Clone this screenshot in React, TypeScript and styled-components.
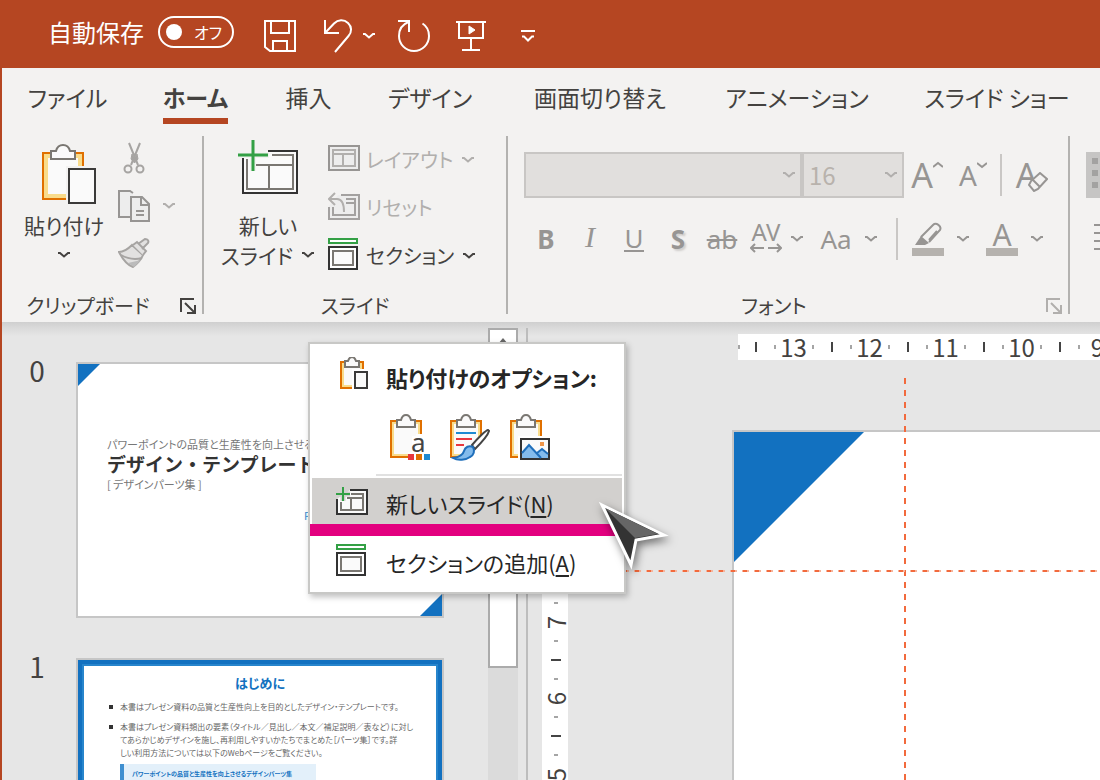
import React from "react";
import styled, { createGlobalStyle, css } from "styled-components";

const color = {
  brand: "#b54622",
  ribbon: "#f3f2f1",
  text: "#444240",
  muted: "#979593",
  disabled: "#b1afad",
  line: "#b3b2b0",
  desk: "#e6e6e6",
  blue: "#1271c0",
  guide: "#f26a3d",
  green: "#33a045",
  pink: "#e3007f",
};

const GlobalStyle = createGlobalStyle`
  *, *::before, *::after { box-sizing: border-box; }
  body {
    margin: 0;
    font-family: "Noto Sans CJK JP", "Noto Sans", sans-serif;
    font-feature-settings: "palt";
    color: ${color.text};
    overflow: hidden;
  }
  button, select {
    font: inherit;
    font-feature-settings: inherit;
    color: inherit;
    background: none;
    border: 0;
    padding: 0;
    margin: 0;
  }
  svg { display: block; flex: none; }
`;

/* ---------- Window frame ---------- */

const Window = styled.div`
  display: flex;
  flex-direction: column;
  height: 100vh;
  overflow: hidden;
`;

const TitleBar = styled.header`
  display: flex;
  align-items: center;
  flex: none;
  height: 68px;
  padding: 0 48px 4px;
  background: ${color.brand};
  color: #fff;
`;

const AutoSave = styled.div`
  display: flex;
  align-items: center;
  gap: 14px;
  font-size: 24px;
  line-height: 32px;
`;

const Switch = styled.button`
  display: flex;
  align-items: center;
  justify-content: space-between;
  width: 76px;
  height: 32px;
  padding: 0 10px 0 6px;
  border: 2px solid #fff;
  border-radius: 16px;
  font-size: 16px;
  line-height: 24px;
`;

const Knob = styled.span`
  width: 16px;
  height: 16px;
  border-radius: 50%;
  background: #fff;
`;

const QuickAccess = styled.div`
  display: flex;
  align-items: center;
  gap: 22px;
  margin-left: 30px;
  padding-top: 8px;
`;

const QuickButton = styled.button<{ $width: number }>`
  display: flex;
  align-items: center;
  justify-content: center;
  flex: none;
  width: ${(p) => p.$width}px;
  height: 34px;
`;

const SplitPair = styled.div<{ $gap: number }>`
  display: flex;
  align-items: center;
  gap: ${(p) => p.$gap}px;
`;

const Frame = styled.div`
  display: flex;
  flex-direction: column;
  flex: 1;
  min-height: 0;
  border-left: 2px solid ${color.brand};
`;

/* ---------- Tabs ---------- */

const TabBar = styled.nav`
  display: flex;
  flex: none;
  height: 64px;
  overflow: hidden;
  background: ${color.ribbon};
`;

const Tab = styled.button<{ $width: number; $active?: boolean }>`
  flex: none;
  width: ${(p) => p.$width}px;
  height: 56px;
  font-size: 23px;
  line-height: 32px;
  font-weight: ${(p) => (p.$active ? 700 : 400)};
`;

const TabLabel = styled.span<{ $active?: boolean }>`
  display: inline-block;
  padding: 13px 0 5px;
  border-bottom: 6px solid ${(p) => (p.$active ? color.brand : "transparent")};
  white-space: nowrap;
`;

/* ---------- Ribbon ---------- */

const Ribbon = styled.div`
  display: flex;
  flex: none;
  height: 190px;
  overflow: hidden;
  background: ${color.ribbon};
`;

const Group = styled.section<{ $width: number }>`
  display: flex;
  flex-direction: column;
  flex: none;
  width: ${(p) => p.$width}px;
`;

const GroupDivider = styled.div`
  flex: none;
  width: 2px;
  margin: 4px 0 8px;
  background: ${color.line};
`;

const GroupBody = styled.div<{ $inset: number; $gap: number }>`
  display: flex;
  gap: ${(p) => p.$gap}px;
  height: 158px;
  padding: 8px 0 0 ${(p) => p.$inset}px;
`;

const GroupFooter = styled.footer`
  display: flex;
  align-items: center;
  height: 32px;
  font-size: 20px;
  line-height: 30px;
`;

const GroupName = styled.span`
  flex: 1;
  text-align: center;
  white-space: nowrap;
`;

const Launcher = styled.button`
  display: flex;
  justify-content: center;
  width: 28px;
  color: ${color.text};
  &:disabled { color: ${color.disabled}; }
`;

const LargeButton = styled.button<{ $width: number }>`
  display: flex;
  flex-direction: column;
  align-items: center;
  align-self: flex-start;
  flex: none;
  width: ${(p) => p.$width}px;
  font-size: 21px;
  line-height: 30px;
  white-space: nowrap;
  svg + span { margin-top: 6px; }
`;

const LabelLine = styled.span`
  display: flex;
  align-items: center;
  justify-content: center;
  gap: 8px;
  height: 30px;
`;

const SmallColumn = styled.div`
  display: flex;
  flex-direction: column;
  gap: 16px;
  padding-top: 2px;
`;

const SmallButton = styled.button`
  display: flex;
  align-items: center;
  gap: 6px;
  height: 32px;
  font-size: 20px;
  line-height: 32px;
  white-space: nowrap;
  &:disabled { color: ${color.disabled}; }
`;

const SmallLabel = styled.span`
  display: flex;
  align-items: center;
  gap: 8px;
  padding-top: 4px;
`;

const FontRows = styled.div`
  display: flex;
  flex-direction: column;
  gap: 20px;
  padding-top: 12px;
`;

const ToolRow = styled.div<{ $height: number }>`
  display: flex;
  align-items: center;
  height: ${(p) => p.$height}px;
  color: ${color.muted};
`;

const Combo = styled.div<{ $width: number }>`
  display: grid;
  grid-template-columns: 1fr 18px;
  align-items: center;
  flex: none;
  width: ${(p) => p.$width}px;
  height: 46px;
  border: 2px solid #c8c6c4;
  background: #e1dfdd;
  color: ${color.disabled};
  select {
    appearance: none;
    height: 42px;
    padding: 0 0 2px 5px;
    font-size: 24px;
    opacity: 1;
    color: #b8b2ac;
  }
`;

const Tool = styled.button<{ $width: number }>`
  display: flex;
  align-items: center;
  justify-content: center;
  flex: none;
  width: ${(p) => p.$width}px;
  height: 42px;
  color: ${color.muted};
`;

const DropTool = styled.button`
  display: flex;
  justify-content: center;
  flex: none;
  width: 18px;
  color: ${color.muted};
`;

const ToolDivider = styled.div<{ $before: number }>`
  flex: none;
  width: 2px;
  height: 42px;
  margin: 0 4px 0 ${(p) => p.$before}px;
  background: #c9c7c5;
`;

const Split = styled.div`
  display: flex;
  align-items: center;
  & + & { margin-left: 4px; }
`;

const latin = css`
  font-family: "Noto Sans", "Open Sans", sans-serif;
  line-height: 42px;
`;

const Glyph = styled.span<{ $size: number; $bold?: boolean }>`
  ${latin}
  font-size: ${(p) => p.$size}px;
  font-weight: ${(p) => (p.$bold ? 700 : 400)};
`;

const ItalicGlyph = styled.span`
  font-family: "Liberation Serif", serif;
  font-style: italic;
  font-size: 30px;
  line-height: 38px;
  padding-bottom: 4px;
`;

const UnderGlyph = styled.span`
  ${latin}
  font-size: 26px;
  line-height: 23px;
  border-bottom: 2px solid currentColor;
`;

const ShadowGlyph = styled(Glyph)`
  text-shadow: 2px 2px 2px #d0cecc;
`;

const StrikeGlyph = styled(Glyph)`
  text-decoration: line-through;
  text-decoration-thickness: 2px;
`;

const SpacingGlyph = styled.span`
  display: flex;
  flex-direction: column;
  align-items: center;
  font-family: "Noto Sans", "Open Sans", sans-serif;
  font-size: 24px;
  line-height: 22px;
  padding-bottom: 4px;
`;

const Bulleted = styled.button`
  flex: none;
  display: flex;
  width: 60px;
  height: 46px;
  padding: 6px;
  background: #c6c5c4;
`;

/* ---------- Workspace ---------- */

const Workspace = styled.main`
  position: relative;
  display: flex;
  flex: 1;
  min-height: 0;
  overflow: hidden;
  background: linear-gradient(#cfcfcf, #d8d8d8 5px, #e0e0e0 10px, ${color.desk} 14px);
`;

const SlideList = styled.ol`
  flex: none;
  width: 486px;
  margin: 0;
  padding: 40px 0 0;
  list-style: none;
`;

const SlideItem = styled.li`
  display: flex;
  margin-bottom: 40px;
`;

const SlideNumber = styled.span`
  width: 70px;
  margin-right: 4px;
  text-align: center;
  font-size: 28px;
  line-height: 16px;
`;

const Thumb = styled.article<{ $framed?: boolean }>`
  position: relative;
  width: 368px;
  height: 256px;
  overflow: hidden;
  background: #fff;
  border: 2px solid #c6c6c6;
  box-shadow: ${(p) => (p.$framed ? "inset 0 0 0 4px #1271c0, inset 0 0 0 6px #2785cc" : "none")};
`;

const Corner = styled.span<{ $size: number; $end?: boolean }>`
  position: absolute;
  width: ${(p) => p.$size}px;
  height: ${(p) => p.$size}px;
  background: ${color.blue};
  ${(p) =>
    p.$end
      ? css`right: 0; bottom: 0; clip-path: polygon(100% 0, 100% 100%, 0 100%);`
      : css`left: 0; top: 0; clip-path: polygon(0 0, 100% 0, 0 100%);`}
`;

const CoverText = styled.div`
  padding: 71px 0 0 29px;
  white-space: nowrap;
  p { margin: 0; font-size: 11px; line-height: 18px; color: #777; }
  h2 {
    margin: 0;
    font-size: 19px;
    line-height: 22px;
    font-feature-settings: normal;
    color: #333;
  }
`;

const CoverMark = styled.span`
  display: block;
  padding: 12px 0 0 197px;
  font-size: 11px;
  line-height: 20px;
  color: #3a8fd0;
`;

const IntroText = styled.div`
  padding: 13px 26px 0 42px;
  font-size: 8px;
  line-height: 13px;
  color: #666;
  white-space: nowrap;
  h2 {
    margin: 0 16px 7px 0;
    text-align: center;
    font-size: 13px;
    line-height: 20px;
    color: ${color.blue};
  }
  ul { margin: 0 0 5px; padding: 0; list-style: none; }
  li { position: relative; }
  li + li { margin-top: 7px; }
  li::before {
    content: "";
    position: absolute;
    left: -11px;
    top: 5px;
    width: 4px;
    height: 4px;
    background: #333;
  }
`;

const IntroNote = styled.p`
  width: 196px;
  height: 40px;
  margin: 0;
  padding: 3px 8px;
  border-left: 4px solid #3f8fd0;
  background: #e3f0fa;
  color: ${color.blue};
  font-size: 6px;
  font-weight: 700;
`;

const ScrollBar = styled.div`
  display: flex;
  flex-direction: column;
  flex: none;
  width: 30px;
  margin-top: 6px;
  background: #dbdbdb;
`;

const ScrollUp = styled.button`
  display: flex;
  justify-content: center;
  height: 30px;
  padding-top: 8px;
  border: 2px solid #ababab;
  background: #fff;
`;

const ScrollThumb = styled.div`
  height: 310px;
  border: 2px solid #ababab;
  background: #fff;
`;

const Splitter = styled.div`
  flex: none;
  width: 2px;
  margin: 6px 0 0 8px;
  background: #bdbdbd;
`;

const Editor = styled.section`
  display: grid;
  flex: 1;
  min-width: 0;
  grid-template-columns: 26px 1fr;
  grid-template-rows: 26px 1fr;
  padding: 12px 0 0 14px;
`;

const HRuler = styled.div`
  grid-column: 2;
  display: flex;
  align-items: center;
  height: 26px;
  min-width: 0;
  margin-left: 170px;
  background: #fff;
  &::before {
    content: "";
    flex: none;
    width: 2px;
    height: 4px;
    margin-right: 6px;
    background: #a5a5a5;
  }
`;

const VRuler = styled.div`
  grid-column: 1;
  grid-row: 2;
  display: flex;
  flex-direction: column;
  align-items: center;
  min-height: 0;
  margin-top: 72px;
  padding-top: 10px;
  background: #fff;
`;

const Slot = styled.span<{ $vertical?: boolean }>`
  display: flex;
  align-items: center;
  justify-content: center;
  flex: none;
  width: 19px;
  height: 19px;
  font-size: 24px;
  line-height: 24px;
  ${(p) => p.$vertical && "transform: rotate(-90deg);"}
`;

const Tick = styled.i<{ $minor?: boolean }>`
  flex: none;
  width: 2px;
  height: ${(p) => (p.$minor ? 4 : 10)}px;
  background: ${(p) => (p.$minor ? "#a5a5a5" : "#444")};
`;

const Canvas = styled.div`
  position: relative;
  display: flex;
  grid-column: 2;
  grid-row: 2;
  min-width: 0;
  padding: 70px 0 0 164px;
`;

const SlidePage = styled.div`
  position: relative;
  flex: 1;
  border: solid #c6c6c6;
  border-width: 2px 0 0 2px;
  background: #fff;
`;

const VGuide = styled.div`
  position: absolute;
  left: 336px;
  top: 18px;
  bottom: 0;
  width: 2px;
  background: repeating-linear-gradient(${color.guide} 0 6px, transparent 6px 12px);
`;

const HGuide = styled.div`
  position: absolute;
  left: 54px;
  right: 0;
  top: 210px;
  height: 2px;
  background: repeating-linear-gradient(
    90deg, #f6b49c 0 1px, ${color.guide} 1px 5px, #f6b49c 5px 7px, transparent 7px 12px
  );
`;

/* ---------- Context menu ---------- */

const Menu = styled.div`
  position: absolute;
  left: 306px;
  top: 20px;
  width: 318px;
  padding: 8px 2px;
  border: 2px solid #c8c8c6;
  background: #fff;
  box-shadow: 2px 3px 6px rgba(0, 0, 0, 0.25);
  color: #262626;
  font-size: 22px;
  line-height: 32px;
`;

const menuRow = css`
  display: flex;
  align-items: center;
  gap: 18px;
  width: 100%;
  padding-left: 24px;
  white-space: nowrap;
`;

const MenuHeading = styled.div`
  ${menuRow}
  height: 46px;
  font-weight: 700;
`;

const PasteOptions = styled.div`
  display: flex;
  gap: 20px;
  height: 48px;
  margin: 16px 0 12px;
  padding-left: 78px;
`;

const MenuRule = styled.hr`
  height: 2px;
  margin: 0 0 2px 64px;
  border: 0;
  background: #e1e1e1;
`;

const MenuItem = styled.button<{ $height: number; $active?: boolean }>`
  ${menuRow}
  height: ${(p) => p.$height}px;
  background: ${(p) => (p.$active ? "#d2d0ce" : "transparent")};
  u { text-decoration-thickness: 2px; text-underline-offset: 3px; }
`;

const MenuText = styled.span`
  padding-top: 3px;
`;

const Marker = styled.div`
  height: 12px;
  margin: 0 6px 0 -2px;
  background: ${color.pink};
`;

const Pointer = styled.svg`
  position: absolute;
  left: 590px;
  top: 172px;
  filter: drop-shadow(2px 4px 4px rgba(0, 0, 0, 0.5));
`;

/* ---------- Icons ---------- */

const Chevron = ({ stroke = "currentColor" }: { stroke?: string }) => (
  <svg width="14" height="8" viewBox="0 0 14 8" fill="none" stroke={stroke} strokeWidth="2">
    <path d="M1 2h2l4 3.500L11 2h2" />
  </svg>
);

const SaveIcon = () => (
  <svg width="32" height="32" viewBox="0 0 32 32" fill="none" stroke="#fff" strokeWidth="2">
    <path d="M1 1h30v30H6l-5-4zM7 1v12h18V1M9 31V21h14v10" />
  </svg>
);

const UndoIcon = () => (
  <svg width="36" height="34" viewBox="0 0 36 34" fill="none" stroke="#fff" strokeWidth="2">
    <path d="M7 1v13h14M7.500 13.500L16 4.500c4-4 10-4.200 14-.500s4 9 .500 13L17 33" />
  </svg>
);

const RedoIcon = () => (
  <svg width="34" height="34" viewBox="0 0 34 34" fill="none" stroke="#fff" strokeWidth="2">
    <path d="M1 2h11v11M11.500 3C5 5.500 2 11 2 17a15 15 0 0 0 30 0c0-5.500-2.500-10-6.500-12.500" />
  </svg>
);

const PresentIcon = () => (
  <svg width="30" height="32" viewBox="0 0 30 32" fill="none" stroke="#fff" strokeWidth="2">
    <path d="M0 2h30M3 2v16h24V2M15 18v12M6 30h18" />
    <path d="M13 6l6 4-6 4z" fill="#fff" strokeWidth="1" />
  </svg>
);

const CustomizeIcon = () => (
  <svg width="14" height="14" viewBox="0 0 14 14" fill="none" stroke="#fff" strokeWidth="2">
    <path d="M0 2h14M1 7.500h2l4 4 4-4h2" />
  </svg>
);

const PasteIcon = () => (
  <svg width="64" height="64" viewBox="0 0 64 64">
    <path d="M11 13h40v46H11z" fill="#fafafa" stroke="#e07000" strokeWidth="2" />
    <path d="M14 16h34v40H14z" fill="none" stroke="#f9dc8b" strokeWidth="4" />
    <path d="M19 11h5c1-4 4-6 7-6s6 2 7 6h5v8H19z" fill="#fafafa" stroke="#7a7772" strokeWidth="2" />
    <path d="M34 26h30v38H34z" fill="#f3f2f1" />
    <path d="M37 29h26v34H37z" fill="#fafafa" stroke="#3b3a39" strokeWidth="2" />
  </svg>
);

const CutIcon = () => (
  <svg width="32" height="32" viewBox="0 0 32 32" fill="none" stroke="#a6a4a2" strokeWidth="2">
    <path d="M11 1l9 22M22 1l-9 22" />
    <path d="M14 12l2.500 5 2.500-5 1 5-3.500 4-3.500-4z" fill="#a6a4a2" strokeWidth="1" />
    <circle cx="10" cy="27" r="3.500" />
    <circle cx="22" cy="27" r="3.500" />
  </svg>
);

const CopyIcon = () => (
  <svg width="32" height="32" viewBox="0 0 32 32" fill="#ededed" stroke="#979593" strokeWidth="2">
    <path d="M15 3l-3-2H1v26h11" />
    <path d="M13 7h11l7 7v17H13z" />
    <path d="M23 7v8h8M18 21h8M18 25h8" fill="none" />
  </svg>
);

const BrushIcon = () => (
  <svg width="34" height="32" viewBox="0 0 34 32" fill="#e2e1e0" stroke="#a6a4a2" strokeWidth="2">
    <path d="M1 14c5 0 9-3 13-7l11 10c-2 5-6 9-10 12C9 27 4 20 1 14z" />
    <path d="M3 17c7 4 13 5 21 3M15 7l4-3 9 9-3 4M20 6l7-5c3 0 4 2 3 4l-6 6" />
    <path d="M10 25l6 4 7-7z" fill="#bbb" stroke="none" />
  </svg>
);

const NewSlideLarge = () => (
  <svg width="60" height="64" viewBox="0 0 60 64" fill="none" strokeWidth="2">
    <path d="M30 11h29v42H5V18" fill="#fafafa" stroke="none" />
    <path d="M30 11h29v42H5V18" stroke="#333" />
    <path d="M34 15h21v34H9V19M12 25h43M31 25v24" stroke="#7a7772" />
    <path d="M15 0v31M0 15h31" stroke="#f3f2f1" strokeWidth="6" />
    <path d="M15 0v31M0 15h30" stroke={color.green} strokeWidth="3" />
  </svg>
);

const LayoutIcon = () => (
  <svg width="32" height="26" viewBox="0 0 32 26" fill="none" strokeWidth="2">
    <path d="M1 1h30v24H1z" fill="#ededed" stroke="#979593" />
    <path d="M5 5h22v16H5zM5 9h22M15 9v12" stroke="#b1afad" />
  </svg>
);

const ResetIcon = () => (
  <svg width="32" height="28" viewBox="0 0 32 28" fill="none" strokeWidth="2">
    <path d="M10 3h21v24H1V14" fill="#ededed" stroke="none" />
    <path d="M13 3h18v24H1V15M18 7h9v16H5v-8M18 11h9" stroke="#a3a1a0" />
    <path d="M7 1L1 7l6 6M2 7h7c5 0 7 4 7 13" stroke="#b1afad" />
  </svg>
);

const SectionIcon = () => (
  <svg width="32" height="32" viewBox="0 0 32 32" fill="none" strokeWidth="2">
    <path d="M1 1h28v4H1z" stroke={color.green} fill="#fff" />
    <path d="M1 9h28v22H1z" stroke="#333" fill="#fff" />
    <path d="M5 13h20v14H5z" stroke="#7a7772" fill="#fafafa" />
  </svg>
);

const NewSlideSmall = () => (
  <svg width="32" height="28" viewBox="0 0 32 28" fill="none" strokeWidth="2">
    <path d="M14 3h17v24H1V12" stroke="#333" fill="#fafafa" />
    <path d="M15 7h12v16H5v-8M11 11h16M15 11v12" stroke="#7a7772" />
    <path d="M7 0v14M0 7h14" stroke="#d2d0ce" strokeWidth="5" />
    <path d="M7 0v14M0 7h14" stroke={color.green} />
  </svg>
);

const PasteSmall = () => (
  <svg width="32" height="36" viewBox="0 0 32 36" fill="none" strokeWidth="2">
    <path d="M5 5h22v26H5z" stroke="#e07000" fill="#fafafa" />
    <path d="M7 7h18v22H7z" stroke="#f9dc8b" />
    <path d="M9 4h3c1-3 3-4 4-4s3 1 4 4h3v6H9z" stroke="#7a7772" fill="#fafafa" />
    <path d="M16 12h16v24H16z" fill="#fff" />
    <path d="M19 15h12v16H19z" stroke="#3b3a39" fill="#fafafa" />
  </svg>
);

const Board = () => (
  <g fill="none" strokeWidth="2">
    <path d="M1 7h30v36H1z" stroke="#e07000" fill="#fafafa" />
    <path d="M3 9h26v32H3z" stroke="#f9dc8b" />
    <path d="M7 6h4c1-4 3-5 5-5s4 1 5 5h4v7H7z" stroke="#7a7772" fill="#fafafa" />
  </g>
);

const PasteTheme = () => (
  <svg width="40" height="48" viewBox="0 0 40 48">
    <Board />
    <path d="M20 20h20v28H18V38h2z" fill="#fff" />
    <path d="M8 15h18v7h-4v16H8z" fill="#fafafa" />
    <text x="21" y="38" fontSize="26" fontFamily="Noto Sans, sans-serif" fill="#444">a</text>
    <path d="M18 40h6v6h-6z" fill="#e8373e" />
    <path d="M26 40h6v6h-6z" fill="#e07000" />
    <path d="M34 40h6v6h-6z" fill="#1e8ad2" />
  </svg>
);

const PasteFormat = () => (
  <svg width="40" height="48" viewBox="0 0 40 48">
    <Board />
    <path d="M26 24h14v24H6l8-10z" fill="#fff" />
    <path d="M6 19h20" stroke="#1e8ad2" strokeWidth="2" />
    <path d="M6 25h16M6 31h8" stroke="#e8373e" strokeWidth="2" />
    <path d="M38 16c-2 0-11 9-16 15l3 4c6-6 13-14 14-18z" fill="#fff" stroke="#444" strokeWidth="2" />
    <path d="M23 33c-4-2-8 0-9 4s-4 6-11 7c5 3 13 2 17-1 4-2 5-6 3-10z" fill="#83bbec" stroke="#1f6fbb" strokeWidth="2" />
  </svg>
);

const PastePicture = () => (
  <svg width="40" height="48" viewBox="0 0 40 48">
    <Board />
    <path d="M8 22h32v26H8z" fill="#fff" />
    <path d="M11 25h28v20H11z" fill="#fafafa" stroke="#333" strokeWidth="2" />
    <path d="M12 39l7-8 8 8 5-4 6 5v4H12z" fill="#83bbec" />
    <path d="M12 39l7-8 12 13M27 39l5-4 6 5" fill="none" stroke="#1f6fbb" strokeWidth="2" />
    <path d="M30 28h4v4h-4z" fill="#f0964a" />
  </svg>
);

const LauncherIcon = () => (
  <svg width="16" height="16" viewBox="0 0 16 16" fill="none" stroke="currentColor" strokeWidth="2">
    <path d="M1 14V1h13M5 5l9 9M15 7v8H7" />
  </svg>
);

const CaretMark = ({ down = false }: { down?: boolean }) => (
  <svg width="10" height="28" viewBox="0 0 10 28" fill="none" stroke="currentColor" strokeWidth="2">
    <path d={down ? "M0 2l5 4 5-4" : "M0 6l5-4 5 4"} />
  </svg>
);

const EraserIcon = () => (
  <svg width="20" height="20" viewBox="0 0 20 20" fill="#f3f2f1" stroke="currentColor" strokeWidth="2">
    <path d="M12 1l7 6-9 10-4 2-5-6 2-4zM5 8l7 7" />
  </svg>
);

const OverlapTool = styled.span`
  display: flex;
  align-items: flex-end;
  svg { margin: 0 0 4px -9px; }
`;

const SpacingArrows = () => (
  <svg width="32" height="10" viewBox="0 0 32 10" fill="none" stroke="currentColor" strokeWidth="2">
    <path d="M1 5h13M5 1L1 5l4 4M18 5h13M27 1l4 4-4 4" />
  </svg>
);

const HighlighterIcon = () => (
  <svg width="32" height="34" viewBox="0 0 32 34" fill="none">
    <path d="M9 15L21 3c3-3 9 1 7 5L17 20" stroke="#979593" strokeWidth="2" />
    <path d="M9 14l8 7-4 2H3z" fill="#979593" />
    <path d="M17 18l8-9" stroke="#979593" strokeWidth="2" />
    <path d="M0 26h32v8H0z" fill="#b5b2ae" />
  </svg>
);

const FontColorGlyph = styled.span`
  width: 32px;
  height: 34px;
  border-bottom: 8px solid #b5b2ae;
  font-family: "Noto Sans", sans-serif;
  font-size: 30px;
  line-height: 26px;
  text-align: center;
`;

/* ---------- Data ---------- */

const tabs = [
  { name: "ファイル", width: 131 },
  { name: "ホーム", width: 125, active: true },
  { name: "挿入", width: 101 },
  { name: "デザイン", width: 142 },
  { name: "画面切り替え", width: 198 },
  { name: "アニメーション", width: 196 },
  { name: "スライド ショー", width: 204 },
];

const Ruler = ({ marks }: { marks: number[] }) => (
  <>
    {marks.map((n) => (
      <React.Fragment key={n}>
        <Slot><Tick /></Slot>
        <Slot><Tick $minor /></Slot>
        <Slot>{n}</Slot>
        <Slot><Tick $minor /></Slot>
      </React.Fragment>
    ))}
  </>
);

const SideRuler = ({ marks }: { marks: number[] }) => (
  <>
    {marks.map((n) => (
      <React.Fragment key={n}>
        <Slot $vertical><Tick $minor /></Slot>
        <Slot $vertical>{n}</Slot>
        <Slot $vertical><Tick $minor /></Slot>
        <Slot $vertical><Tick /></Slot>
      </React.Fragment>
    ))}
  </>
);

/* ---------- App ---------- */

export default function App() {
  return (
    <Window lang="ja">
      <GlobalStyle />
      <TitleBar>
        <AutoSave>
          <span id="autosave">自動保存</span>
          <Switch role="switch" aria-checked={false} aria-labelledby="autosave">
            <Knob />
            オフ
          </Switch>
        </AutoSave>
        <QuickAccess>
          <QuickButton $width={32} aria-label="上書き保存"><SaveIcon /></QuickButton>
          <SplitPair $gap={8}>
            <QuickButton $width={36} aria-label="元に戻す"><UndoIcon /></QuickButton>
            <QuickButton $width={14} aria-label="元に戻す履歴"><Chevron /></QuickButton>
          </SplitPair>
          <QuickButton $width={32} aria-label="繰り返し"><RedoIcon /></QuickButton>
          <QuickButton $width={38} aria-label="先頭から開始"><PresentIcon /></QuickButton>
          <QuickButton $width={32} aria-label="クイック アクセスのカスタマイズ"><CustomizeIcon /></QuickButton>
        </QuickAccess>
      </TitleBar>

      <Frame>
        <TabBar>
          {tabs.map((t) => (
            <Tab key={t.name} $width={t.width} $active={t.active}>
              <TabLabel $active={t.active}>{t.name}</TabLabel>
            </Tab>
          ))}
        </TabBar>

        <Ribbon>
          <Group $width={200}>
            <GroupBody $inset={18} $gap={10}>
              <LargeButton $width={88}>
                <PasteIcon />
                <LabelLine>貼り付け</LabelLine>
                <LabelLine><Chevron /></LabelLine>
              </LargeButton>
              <SmallColumn>
                <SmallButton disabled aria-label="切り取り"><CutIcon /></SmallButton>
                <SplitPair $gap={12}>
                  <SmallButton disabled aria-label="コピー"><CopyIcon /></SmallButton>
                  <SmallButton disabled aria-label="コピーのオプション"><Chevron /></SmallButton>
                </SplitPair>
                <SmallButton disabled aria-label="書式のコピー"><BrushIcon /></SmallButton>
              </SmallColumn>
            </GroupBody>
            <GroupFooter>
              <GroupName>クリップボード</GroupName>
              <Launcher aria-label="クリップボードの設定"><LauncherIcon /></Launcher>
            </GroupFooter>
          </Group>
          <GroupDivider />

          <Group $width={302}>
            <GroupBody $inset={18} $gap={14}>
              <LargeButton $width={92}>
                <NewSlideLarge />
                <LabelLine>新しい</LabelLine>
                <LabelLine>スライド <Chevron /></LabelLine>
              </LargeButton>
              <SmallColumn>
                <SmallButton disabled><LayoutIcon /><SmallLabel>レイアウト<Chevron /></SmallLabel></SmallButton>
                <SmallButton disabled><ResetIcon /><SmallLabel>リセット</SmallLabel></SmallButton>
                <SmallButton><SectionIcon /><SmallLabel>セクション<Chevron /></SmallLabel></SmallButton>
              </SmallColumn>
            </GroupBody>
            <GroupFooter><GroupName>スライド</GroupName></GroupFooter>
          </Group>
          <GroupDivider />

          <Group $width={560}>
            <GroupBody $inset={16} $gap={0}>
              <FontRows>
                <ToolRow $height={46}>
                  <Combo $width={278}>
                    <select disabled aria-label="フォント" />
                    <Chevron />
                  </Combo>
                  <Combo $width={102}>
                    <select disabled aria-label="フォント サイズ"><option>16</option></select>
                    <Chevron />
                  </Combo>
                  <Tool $width={46} aria-label="フォント サイズの拡大"><Glyph $size={34}>A</Glyph><CaretMark /></Tool>
                  <Tool $width={46} aria-label="フォント サイズの縮小"><Glyph $size={28}>A</Glyph><CaretMark down /></Tool>
                  <ToolDivider $before={4} />
                  <Tool $width={52} aria-label="書式のクリア">
                    <OverlapTool><Glyph $size={34}>A</Glyph><EraserIcon /></OverlapTool>
                  </Tool>
                </ToolRow>
                <ToolRow $height={42}>
                  <Tool $width={44}><Glyph $size={26} $bold>B</Glyph></Tool>
                  <Tool $width={44}><ItalicGlyph>I</ItalicGlyph></Tool>
                  <Tool $width={44}><UnderGlyph>U</UnderGlyph></Tool>
                  <Tool $width={44}><ShadowGlyph $size={26} $bold>S</ShadowGlyph></Tool>
                  <Tool $width={44}><StrikeGlyph $size={26}>ab</StrikeGlyph></Tool>
                  <Split>
                    <Tool $width={44}><SpacingGlyph>AV<SpacingArrows /></SpacingGlyph></Tool>
                    <DropTool aria-label="文字の間隔"><Chevron /></DropTool>
                  </Split>
                  <Split>
                    <Tool $width={52}><Glyph $size={26}>Aa</Glyph></Tool>
                    <DropTool aria-label="文字種の変換"><Chevron /></DropTool>
                  </Split>
                  <ToolDivider $before={16} />
                  <Split>
                    <Tool $width={52} aria-label="蛍光ペンの色"><HighlighterIcon /></Tool>
                    <DropTool aria-label="蛍光ペンの色の選択"><Chevron /></DropTool>
                  </Split>
                  <Split>
                    <Tool $width={52}><FontColorGlyph>A</FontColorGlyph></Tool>
                    <DropTool aria-label="フォントの色の選択"><Chevron /></DropTool>
                  </Split>
                </ToolRow>
              </FontRows>
            </GroupBody>
            <GroupFooter>
              <GroupName>フォント</GroupName>
              <Launcher disabled aria-label="フォントの設定"><LauncherIcon /></Launcher>
            </GroupFooter>
          </Group>
          <GroupDivider />

          <Group $width={300}>
            <GroupBody $inset={16} $gap={0}>
              <FontRows>
                <Bulleted aria-label="箇条書き">
                  <svg width="48" height="34" viewBox="0 0 48 34" fill="#a3a2a1">
                    <path d="M0 0h6v6H0zM0 12h6v6H0zM0 24h6v6H0zM14 2h34v2H14zM14 14h34v2H14zM14 26h34v2H14z" />
                  </svg>
                </Bulleted>
                <Tool $width={48} aria-label="左揃え">
                  <svg width="32" height="30" viewBox="0 0 32 30" stroke="#979593" strokeWidth="2">
                    <path d="M0 1h32M0 9h20M0 17h32M0 25h20" />
                  </svg>
                </Tool>
              </FontRows>
            </GroupBody>
          </Group>
        </Ribbon>

        <Workspace>
          <SlideList>
            <SlideItem>
              <SlideNumber>0</SlideNumber>
              <Thumb>
                <Corner $size={22} />
                <CoverText>
                  <p>パワーポイントの品質と生産性を向上させる</p>
                  <h2>デザイン・テンプレート</h2>
                  <p>[ デザインパーツ集 ]</p>
                  <CoverMark>P</CoverMark>
                </CoverText>
                <Corner $size={22} $end />
              </Thumb>
            </SlideItem>
            <SlideItem>
              <SlideNumber>1</SlideNumber>
              <Thumb $framed>
                <IntroText>
                  <h2>はじめに</h2>
                  <ul>
                    <li>本書はプレゼン資料の品質と生産性向上を目的としたデザイン・テンプレートです。</li>
                    <li>
                      本書はプレゼン資料頻出の要素（タイトル／見出し／本文／補足説明／表など）に対し<br />
                      てあらかじめデザインを施し、再利用しやすいかたちでまとめた［パーツ集］です。詳<br />
                      しい利用方法については以下のWebページをご覧ください。
                    </li>
                  </ul>
                  <IntroNote>パワーポイントの品質と生産性を向上させるデザインパーツ集</IntroNote>
                </IntroText>
              </Thumb>
            </SlideItem>
          </SlideList>

          <ScrollBar>
            <ScrollUp aria-label="上へスクロール">
              <svg width="10" height="6" viewBox="0 0 10 6" fill="#666"><path d="M5 0l5 6H0z" /></svg>
            </ScrollUp>
            <ScrollThumb />
          </ScrollBar>
          <Splitter />

          <Editor>
            <HRuler><Ruler marks={[13, 12, 11, 10, 9, 8, 7, 6]} /></HRuler>
            <VRuler><SideRuler marks={[9, 8, 7, 6, 5, 4, 3]} /></VRuler>
            <Canvas>
              <SlidePage><Corner $size={130} /></SlidePage>
              <VGuide />
              <HGuide />
            </Canvas>
          </Editor>

          <Menu role="menu">
            <MenuHeading><PasteSmall /><MenuText>貼り付けのオプション:</MenuText></MenuHeading>
            <PasteOptions>
              <button aria-label="貼り付け先のテーマを使用"><PasteTheme /></button>
              <button aria-label="元の書式を保持"><PasteFormat /></button>
              <button aria-label="図"><PastePicture /></button>
            </PasteOptions>
            <MenuRule />
            <MenuItem role="menuitem" $height={46} $active>
              <NewSlideSmall /><MenuText>新しいスライド(<u>N</u>)</MenuText>
            </MenuItem>
            <Marker />
            <MenuItem role="menuitem" $height={48}>
              <SectionIcon /><MenuText>セクションの追加(<u>A</u>)</MenuText>
            </MenuItem>
          </Menu>

          <Pointer width="84" height="84" viewBox="0 0 84 84">
            <path d="M10 11L72 41 44 46 39 71z" fill="#333" stroke="#fff" strokeWidth="3" />
            <path d="M13 14l53 26-23 4z" fill="#666" />
          </Pointer>
        </Workspace>
      </Frame>
    </Window>
  );
}
